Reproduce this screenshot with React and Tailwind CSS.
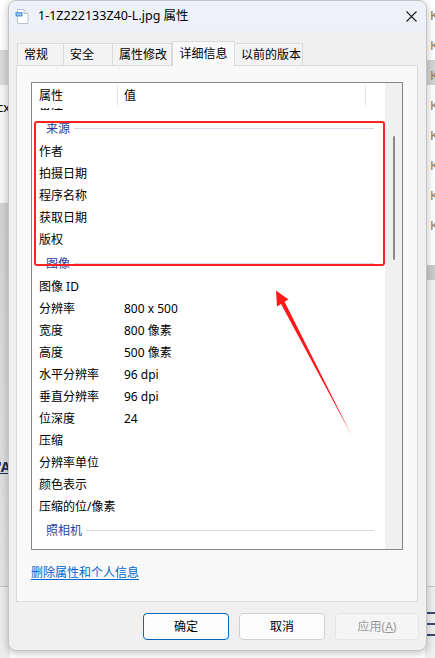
import React from 'react';

const TABS = [
  { label: '常规', w: 'w-[47px]' },
  { label: '安全', w: 'w-[49px]' },
  { label: '属性修改', w: 'w-[59px]' },
  { label: '详细信息', w: 'w-[63px]', active: true },
  { label: '以前的版本', w: 'w-[68px]' },
];

// list content, scrolled a little so the row above 来源 is cut off
const ROWS = [
  { name: '备注' },
  { group: '来源' },
  { name: '作者' },
  { name: '拍摄日期' },
  { name: '程序名称' },
  { name: '获取日期' },
  { name: '版权' },
  { group: '图像' },
  { name: '图像 ID' },
  { name: '分辨率', value: '800 x 500' },
  { name: '宽度', value: '800 像素' },
  { name: '高度', value: '500 像素' },
  { name: '水平分辨率', value: '96 dpi' },
  { name: '垂直分辨率', value: '96 dpi' },
  { name: '位深度', value: '24' },
  { name: '压缩' },
  { name: '分辨率单位' },
  { name: '颜色表示' },
  { name: '压缩的位/像素' },
  { group: '照相机' },
];

function FileIcon() {
  return (
    <svg width="15" height="15" viewBox="0 0 15 15">
      <path d="M2.5 0.5h6.5l4 4v10h-10.5z" fill="#ffffff" stroke="#b9c3cf" strokeWidth="1" />
      <path d="M9 0.5v4h4" fill="#e6ebf1" stroke="#b9c3cf" strokeWidth="1" />
      <rect x="0.5" y="3" width="7" height="4.5" rx="0.5" fill="#5b9bd5" />
      <rect x="1.8" y="4.4" width="4.2" height="1.6" fill="#a9ccee" />
    </svg>
  );
}

function CloseIcon() {
  return (
    <svg width="11" height="11" viewBox="0 0 11 11">
      <path d="M0.5 0.5l10 10M10.5 0.5l-10 10" stroke="#1b1b1b" strokeWidth="1.1" />
    </svg>
  );
}

function Row({ row }) {
  if (row.group) {
    return (
      <div className="h-[25px] flex items-center pl-[14px] pr-[11px]">
        <span className="text-[#2b3f9e] text-[12px] leading-none">{row.group}</span>
        <div className="flex-1 h-px bg-[#d4dbe5] ml-[4px]" />
      </div>
    );
  }
  return (
    <div className="h-[22px] flex items-center text-[12px] leading-none text-black">
      <div className="w-[92px] pl-[7px] whitespace-nowrap">{row.name}</div>
      <div>{row.value}</div>
    </div>
  );
}

function Arrow() {
  return (
    <svg className="absolute left-0 top-0 pointer-events-none" width="435" height="658" viewBox="0 0 435 658">
      <polygon
        points="276,290.5 288.5,299.5 284.6,301.8 352,436 281,304 277,306.5"
        fill="#ff1a1a"
      />
    </svg>
  );
}

export default function App() {
  return (
    <div className="relative w-[435px] h-[658px] overflow-hidden bg-white font-['Segoe_UI','Noto_Sans','Noto_Sans_CJK_SC',sans-serif]">
      {/* desktop behind the dialog: left strip */}
      <div className="absolute left-0 top-0 w-[10px] h-full flex flex-col">
        <div className="h-[50px] bg-white" />
        <div className="h-[35px] bg-[#d9d9d9]" />
        <div className="h-[118px] bg-[#f6f6f6]" />
        <div className="h-[384px] bg-gradient-to-b from-[#d2d2d2] to-[#e4e4e4] border-b border-[#c4c4c4]" />
        <div className="flex-1 bg-[#ececec]" />
      </div>
      {/* right strip */}
      <div className="absolute right-0 top-0 w-[10px] h-full flex flex-col">
        <div className="h-[60px] bg-white" />
        <div className="h-[25px] bg-[#d3d3d3]" />
        <div className="h-[180px] bg-white" />
        <div className="h-[15px] bg-[#cbcbcb]" />
        <div className="h-[307px] bg-[#f3f3f3] border-b border-[#c9c9c9]" />
        <div className="flex-1 bg-[#efefef]" />
      </div>
      <div className="absolute left-[-3px] top-[98px] text-[13px] text-black">cx</div>
      <div className="absolute left-[-2px] top-[456px] text-[14px] font-bold text-[#1e2b55] underline">'A</div>
      <div className="absolute right-[-3px] top-0 flex flex-col text-[13px] leading-[30px] text-[#a07a50]">
        <span>K</span>
        <span>K</span>
        <span>K</span>
        <span>K</span>
        <span>K</span>
        <span>K</span>
        <span>K</span>
        <span>K</span>
      </div>
      <div className="absolute right-0 top-[612px] w-[8px] flex flex-col gap-[9px]">
        <div className="h-[2px] bg-[#3b4a6b]" />
        <div className="h-[2px] bg-[#3b4a6b]" />
        <div className="h-[2px] bg-[#3b4a6b]" />
      </div>

      {/* dialog window */}
      <div className="absolute left-[8px] top-0 w-[419px] h-[651px] rounded-[8px] border border-[#c3c3c3] bg-[#f0f0f0] shadow-[0_2px_8px_rgba(0,0,0,0.25)] flex flex-col overflow-hidden">
        <div className="h-[30px] shrink-0 bg-[#eef2f8] flex items-center pl-[6px] pr-[9px]">
          <FileIcon />
          <span className="ml-[8px] text-[12.5px] text-black leading-none">1-1Z222133Z40-L.jpg 属性</span>
          <div className="ml-auto flex items-center">
            <CloseIcon />
          </div>
        </div>

        {/* tabs */}
        <div className="flex items-end h-[34px] pl-[8px] shrink-0">
          {TABS.map((t) => (
            <div
              key={t.label}
              className={
                t.active
                  ? `${t.w} h-[25px] -mb-px relative z-10 bg-[#f9f9f9] border border-b-0 border-[#dadada] flex items-center justify-center text-[12px] leading-none text-black`
                  : `${t.w} h-[22px] bg-[#f3f3f3] border border-b-0 border-l-0 first:border-l border-[#dadada] flex items-center pl-[6px] text-[12px] leading-none text-black`
              }
            >
              {t.label}
            </div>
          ))}
        </div>

        {/* tab panel */}
        <div className="ml-[7px] w-[402px] h-[537px] shrink-0 bg-[#f9f9f9] border border-[#dadada] pt-[16px] pl-[14px]">
          <div className="w-[372px] h-[468px] border border-[#838790] bg-white flex">
            <div className="flex-1 flex flex-col min-w-0">
              <div className="h-[25px] shrink-0 flex items-stretch text-[12px] leading-none text-black">
                <div className="w-[86px] pl-[7px] flex items-center border-r border-[#e6e6e6] my-[2px]">属性</div>
                <div className="w-[248px] pl-[6px] flex items-center border-r border-[#e6e6e6] my-[2px]">值</div>
              </div>
              <div className="flex-1 overflow-hidden">
                <div className="mt-[-14px]">
                  {ROWS.map((r, i) => (
                    <Row key={i} row={r} />
                  ))}
                </div>
              </div>
            </div>
            <div className="w-[17px] shrink-0 bg-[#f0f0f0] flex justify-center">
              <div className="w-[2px] h-[124px] mt-[53px] rounded-full bg-[#8a8a8a] ml-[1px]" />
            </div>
          </div>
          <div className="mt-[17px] text-[12px] leading-none text-[#0066cc] underline underline-offset-2">删除属性和个人信息</div>
        </div>

        {/* buttons */}
        <div className="flex justify-end gap-[10px] pr-[7px] pt-[11px]">
          <button className="w-[86px] h-[27px] rounded-[4px] border border-[#0067c0] bg-[#fdfdfd] text-[12px] leading-none text-black">确定</button>
          <button className="w-[86px] h-[27px] rounded-[4px] border border-[#d0d0d0] bg-[#fdfdfd] text-[12px] leading-none text-black">取消</button>
          <button className="w-[84px] h-[27px] rounded-[4px] border border-[#e5e5e5] bg-[#f5f5f5] text-[12px] leading-none text-[#9a9a9a]">
            应用(<span className="underline">A</span>)
          </button>
        </div>
      </div>

      {/* annotations */}
      <div className="absolute left-[34px] top-[121px] w-[351px] h-[145px] border-2 border-[#ff2222] rounded-[3px] pointer-events-none" />
      <Arrow />
    </div>
  );
}
